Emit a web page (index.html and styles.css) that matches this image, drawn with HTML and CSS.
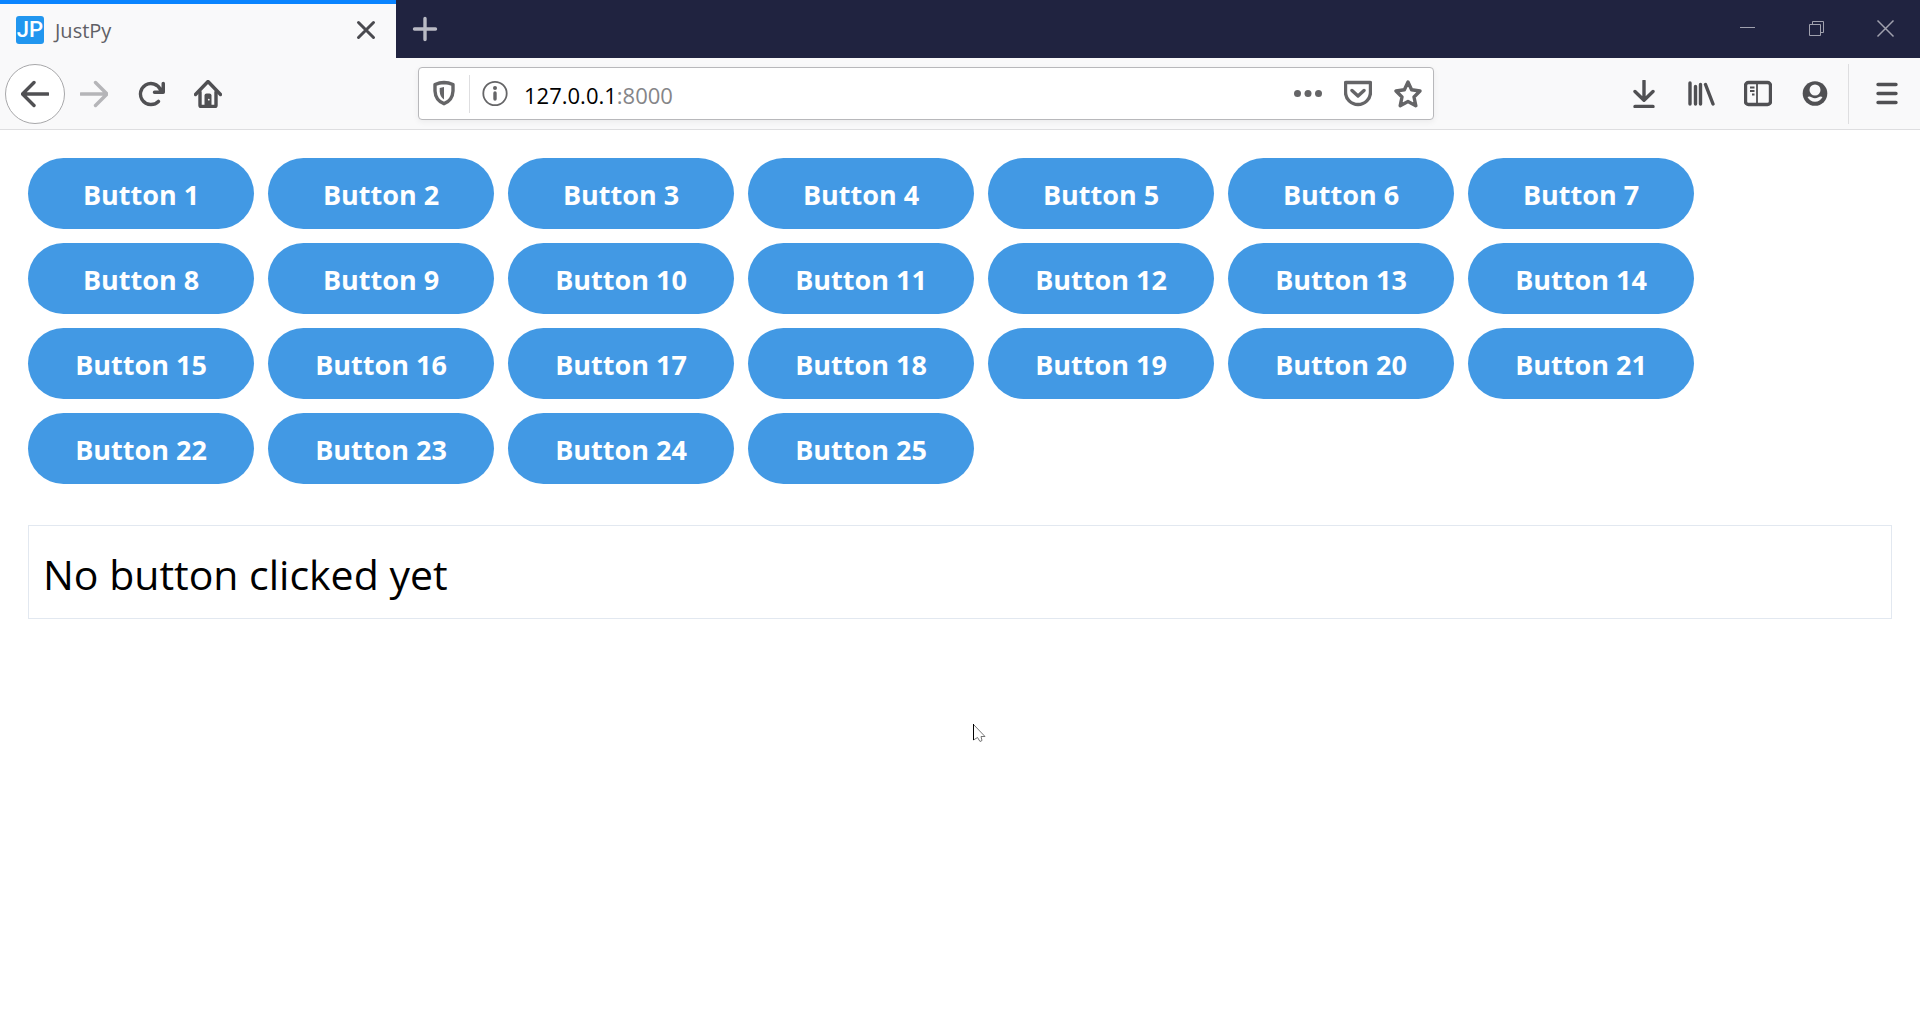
FILE: index.html
```html
<!DOCTYPE html>
<html lang="en">
<head>
<meta charset="utf-8">
<meta name="viewport" content="width=device-width, initial-scale=1">
<title>JustPy</title>
<link rel="stylesheet" href="styles.css">
</head>
<body>
<header class="browser">
  <div class="tab-strip">
    <div class="tab">
      <span class="favicon">JP</span>
      <span class="tab-title">JustPy</span>
      <button class="tab-close" aria-label="Close tab"><svg viewBox="0 0 28 28"><path d="M6.500 6.500 21.500 21.500M21.500 6.500 6.500 21.500" class="line"/></svg></button>
    </div>
    <button class="new-tab" aria-label="New tab"><svg viewBox="0 0 28 28"><path d="M14 3.500v21M3.500 14h21" class="line"/></svg></button>
    <div class="window-controls">
      <button aria-label="Minimize"><svg viewBox="0 0 28 28"><path d="M6 12.500h15" class="hair"/></svg></button>
      <button aria-label="Restore"><svg viewBox="0 0 28 28"><path d="M6.500 9.500h11v11h-11zM9.500 9.500v-3h11v11h-3" class="hair"/></svg></button>
      <button aria-label="Close window"><svg viewBox="0 0 28 28"><path d="M5.500 5.500 21.500 21.500M21.500 5.500 5.500 21.500" class="hair diagonal"/></svg></button>
    </div>
  </div>
  <div class="toolbar">
    <nav class="nav-buttons" aria-label="Navigation">
      <button class="tool back" aria-label="Back"><svg viewBox="0 0 28 28"><path d="M27 14H2M13 2.500 1.500 14 13 25.500" class="line"/></svg></button>
      <button class="tool" aria-label="Forward" disabled><svg viewBox="0 0 28 28"><path d="M1 14h25M15.500 2.500 27 14 15.500 25.500" class="line"/></svg></button>
      <button class="tool" aria-label="Reload"><svg viewBox="0 0 16 16"><path class="solid" d="M15 1a1 1 0 0 0-1 1v2.418A6.995 6.995 0 1 0 8 15a6.954 6.954 0 0 0 4.950-2.050 1 1 0 0 0-1.414-1.414A5.019 5.019 0 1 1 12.549 6H10a1 1 0 0 0 0 2h5a1 1 0 0 0 1-1V2a1 1 0 0 0-1-1z"/></svg></button>
      <button class="tool" aria-label="Home"><svg viewBox="0 0 28 28"><path d="M1.500 14.500 14 1.500 26.500 14.500" class="line"/><path d="M6 12v13.500q0 1 1 1h14q1 0 1-1V12" class="line"/><path class="solid" d="M10.500 27V15.500q0-2 2-2h3q2 0 2 2V27z"/><circle class="knob" cx="14.800" cy="19.700" r=".9"/></svg></button>
    </nav>
    <div class="url-bar">
      <button class="tool shield" aria-label="Tracking protection"><svg viewBox="0 0 28 28"><path d="M14 2.500 Q18.500 2.600 23 4.500 V11 Q22.500 20.500 14 23.700 Q5.500 20.500 5 11 V4.500 Q9.500 2.600 14 2.500Z" class="line"/><path class="solid" d="M14 7 9.700 8V11.500Q10 17 14 19.500z"/></svg></button>
      <button class="tool" aria-label="Site information"><svg viewBox="0 0 28 28"><circle cx="14" cy="13.500" r="11.700" class="ring"/><circle class="solid" cx="14" cy="8" r="2"/><path d="M14 13v6" class="line"/></svg></button>
      <div class="address"><input class="host" type="text" value="127.0.0.1" aria-label="Address" spellcheck="false"><span class="port">:8000</span></div>
      <div class="page-actions">
        <button class="tool" aria-label="Page actions"><svg viewBox="0 0 28 28"><circle class="solid" cx="3.500" cy="13.500" r="3.500"/><circle class="solid" cx="14" cy="13.500" r="3.500"/><circle class="solid" cx="24.500" cy="13.500" r="3.500"/></svg></button>
        <button class="tool" aria-label="Save to Pocket"><svg viewBox="0 0 28 28"><path d="M2 2.500h24q.5 0 .5.5v9A12.500 12.500 0 0 1 1.500 12V3q0-.5.500-.5zM8 10.500l6 5.500 6-5.500" class="line"/></svg></button>
        <button class="tool" aria-label="Bookmark this page"><svg viewBox="0 0 28 28"><path d="M14 2 17.600 9.700 26 11 20 17 21.800 25.700 14 21.500 6.200 25.700 8 17 2 11 10.400 9.700Z" class="line"/></svg></button>
      </div>
    </div>
    <div class="toolbar-end">
      <button class="tool" aria-label="Downloads"><svg viewBox="0 0 28 28"><path d="M14 1v19M5 11.500l9 8.800 9-8.800M5 26.500h18" class="line"/></svg></button>
      <button class="tool" aria-label="Library"><svg viewBox="0 0 28 28"><path d="M3 3v21M8.500 6.500V24M13.500 4.500V24M18.500 4.500 26 24" class="line"/></svg></button>
      <button class="tool" aria-label="Sidebars"><svg viewBox="0 0 28 28"><rect x="1.500" y="2.500" width="25" height="22" rx="3" class="line"/><path d="M13 3v21M6 7.500h4.500M6 11h4.500M8 14.500h2.500" class="thin"/></svg></button>
      <button class="tool" aria-label="Account"><svg viewBox="0 0 28 28"><circle cx="14" cy="13.500" r="12.300" class="solid"/><circle cx="14" cy="10" r="5.500" class="cut"/><path class="cut" d="M6.500 17q2-1 4 .2 3.500 2.300 7 0 2-1.200 4-.2-2.500 4.700-7.500 4.700T6.500 17z"/></svg></button>
      <div class="divider"></div>
      <button class="tool menu" aria-label="Open menu"><svg viewBox="0 0 28 28"><path d="M5 4.500h18M5 13.500h18M5 22.500h18" class="line"/></svg></button>
    </div>
  </div>
</header>
<main class="page">
  <div class="button-grid">
    <button class="pill">Button 1</button>
    <button class="pill">Button 2</button>
    <button class="pill">Button 3</button>
    <button class="pill">Button 4</button>
    <button class="pill">Button 5</button>
    <button class="pill">Button 6</button>
    <button class="pill">Button 7</button>
    <button class="pill">Button 8</button>
    <button class="pill">Button 9</button>
    <button class="pill">Button 10</button>
    <button class="pill">Button 11</button>
    <button class="pill">Button 12</button>
    <button class="pill">Button 13</button>
    <button class="pill">Button 14</button>
    <button class="pill">Button 15</button>
    <button class="pill">Button 16</button>
    <button class="pill">Button 17</button>
    <button class="pill">Button 18</button>
    <button class="pill">Button 19</button>
    <button class="pill">Button 20</button>
    <button class="pill">Button 21</button>
    <button class="pill">Button 22</button>
    <button class="pill">Button 23</button>
    <button class="pill">Button 24</button>
    <button class="pill">Button 25</button>
  </div>
  <p class="message">No button clicked yet</p>
</main>
<svg class="cursor" viewBox="0 0 13 19" aria-hidden="true"><path d="M.5.500v15.500l4-2.500 2.500 4 2-1-1-4h4z" fill="#fff" stroke="#666" stroke-width=".9"/><path d="M.5 0v16" stroke="#000"/></svg>
</body>
</html>
```
FILE: styles.css
```css
* {
  box-sizing: border-box;
}

body {
  margin: 0;
  min-height: 100vh;
  background: #fff;
  color: #000;
  font-family: "Open Sans", "Noto Sans", sans-serif;
}

button {
  margin: 0;
  padding: 0;
  border: 0;
  background: none;
  color: inherit;
  font: inherit;
}

svg {
  display: block;
  width: 28px;
  height: 28px;
}

.line {
  fill: none;
  stroke: currentColor;
  stroke-width: 3.4;
  stroke-linecap: round;
  stroke-linejoin: round;
}

.ring,
.thin {
  fill: none;
  stroke: currentColor;
  stroke-width: 1.8;
}

.hair {
  fill: none;
  stroke: currentColor;
  stroke-width: 1;
}

.diagonal {
  stroke-width: 1.5;
}

.solid {
  fill: currentColor;
}

.cut,
.knob {
  fill: #f9f9fa;
}

/* Tab strip */
.tab-strip {
  display: flex;
  height: 58px;
  background: #202340;
  color: #b9bac4;
}

.tab {
  display: flex;
  align-items: center;
  width: 396px;
  padding: 0 16px 2px;
  border-top: 4px solid #0a84ff;
  background: #f9f9fa;
  color: #606066;
}

.favicon {
  width: 28px;
  height: 28px;
  border-radius: 3px;
  background: #2196ef;
  color: #fff;
  font: 500 22px/28px Roboto, sans-serif;
  text-align: center;
}

.tab-title {
  flex: 1;
  margin-left: 11px;
  font-size: 20px;
}

.tab-close {
  color: #4a4a4f;
}

.tab-close .line {
  stroke-width: 3;
}

.new-tab {
  display: grid;
  place-items: center;
  width: 58px;
}

.window-controls {
  display: flex;
  margin-left: auto;
  color: #a0a1ae;
}

.window-controls button {
  display: grid;
  place-items: center;
  width: 69px;
}

/* Toolbar */
.toolbar {
  display: flex;
  align-items: center;
  height: 72px;
  border-bottom: 1px solid #dedee0;
  background: #f9f9fa;
  color: #505053;
}

.nav-buttons {
  display: flex;
  align-items: center;
  gap: 1px;
  padding-left: 5px;
}

.tool {
  display: grid;
  place-items: center;
  flex: none;
  width: 56px;
  height: 56px;
}

.tool:disabled {
  color: #b5b5b8;
}

.back {
  width: 60px;
  height: 60px;
  border: 1px solid #a8a8aa;
  border-radius: 50%;
  background: #fff;
}

.url-bar {
  display: flex;
  flex: 1;
  align-items: center;
  height: 53px;
  margin: 0 182px;
  border: 1px solid #b8b8bb;
  border-radius: 4px;
  background: #fff;
  box-shadow: 0 2px 6px rgba(0, 0, 0, 0.06);
  color: #656567;
}

.url-bar .tool {
  width: 50px;
  height: 38px;
}

.url-bar .shield {
  width: 51px;
  border-right: 1px solid #dedee0;
}

.address {
  display: flex;
  flex: 1;
  align-items: center;
  margin-left: 4px;
  padding-top: 2px;
  font-size: 22px;
  line-height: 32px;
}

.host {
  field-sizing: content;
  padding: 0;
  border: 0;
  outline: 0;
  background: none;
  color: #000;
  font: inherit;
}

.port {
  color: #858588;
}

.page-actions {
  display: flex;
}

.toolbar-end {
  display: flex;
  align-items: center;
  gap: 1px;
}

.divider {
  width: 1px;
  height: 60px;
  margin: 0 3px 0 4px;
  background: #dedee0;
}

.menu {
  width: 67px;
}

/* Page content */
.page {
  padding: 28px;
}

.button-grid {
  display: flex;
  flex-wrap: wrap;
  gap: 14px;
  max-width: 1680px;
}

.pill {
  width: 226px;
  height: 71px;
  padding-top: 2px;
  border-radius: 36px;
  background: #4299e4;
  color: #fff;
  font-size: 27px;
  font-weight: 700;
}

.message {
  margin: 41px 0 0;
  padding: 16px 14px 12px;
  border: 1px solid #e2e8f0;
  font-size: 41px;
  line-height: 64px;
}

.cursor {
  position: absolute;
  left: 973px;
  top: 724px;
  width: 13px;
  height: 19px;
}
```
